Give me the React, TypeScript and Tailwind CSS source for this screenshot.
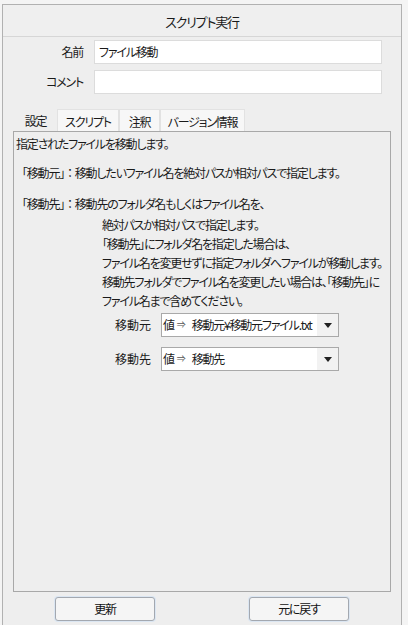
import React from 'react';

const font = "font-['Noto_Sans_CJK_JP','Noto_Sans',sans-serif] [font-feature-settings:'palt']";
const tight = 'tracking-[-1.2px] whitespace-nowrap';
const full = '[font-feature-settings:normal]';

const tabs = [
  { label: '設定', w: 'w-[43px]', active: true },
  { label: 'スクリプト', w: 'w-[62px]', active: false },
  { label: '注釈', w: 'w-[41px]', active: false },
  { label: 'バージョン情報', w: 'w-[85px]', active: false },
];

const detail = [
  '絶対パスか相対パスで指定します。',
  '「移動先」にフォルダ名を指定した場合は、',
  'ファイル名を変更せずに指定フォルダへファイルが移動します。',
  '移動先フォルダでファイル名を変更したい場合は、「移動先」に',
  'ファイル名まで含めてください。',
];

const Field: React.FC<{ label: string; value?: string }> = ({ label, value }) => (
  <div className="flex items-center h-[24px]">
    <div className={`w-[80px] text-right ${tight}`}>{label}</div>
    <div className={`ml-[11px] w-[288px] h-[24px] bg-white border border-[#dcdcdc] flex items-center pl-[4px] ${tight}`}>
      {value}
    </div>
  </div>
);

const Combo: React.FC<{ label: string; value: string }> = ({ label, value }) => (
  <div className="flex items-center h-[24px]">
    <div className="w-[135px] text-right">{label}</div>
    <div className="ml-[10px] w-[178px] h-[24px] bg-white border border-[#a9a9a9] flex items-center overflow-hidden">
      <div className={`flex-1 flex items-center overflow-hidden pl-[1px] ${tight}`}>
        <span>値</span>
        <span className="text-[9px] ml-[3px] text-[#555]">⇒</span>
        <span className="ml-[7px]">{value}</span>
      </div>
      <div className="w-[21px] h-full bg-[#f2f2f2] flex items-center justify-center shrink-0">
        <svg width="8" height="5" viewBox="0 0 8 5"><path d="M0 0h8L4 5z" fill="#222" /></svg>
      </div>
    </div>
  </div>
);

const Button: React.FC<{ label: string }> = ({ label }) => (
  <button className={`w-[100px] h-[24px] rounded-[3px] border border-[#a3a8b0] bg-[#f5f5f5] shadow-[0_0_0_1px_#dbe6f2] text-[12px] text-[#111] ${tight}`}>
    {label}
  </button>
);

export default function App() {
  return (
    <div className={`w-[408px] h-[625px] bg-[#f4f4f4] overflow-hidden text-[12px] text-[#1a1a1a] ${font}`}>
      <div className="ml-[2px] mt-[4px] w-[400px] h-[640px] border border-[#b1b1b1] bg-[#eeeeee]">
        <div className={`h-[32px] border-b border-[#d6d6d6] bg-[#efefef] flex items-center justify-center text-[13px] pt-[2px] ${tight}`}>
          スクリプト実行
        </div>

        <div className="mt-[3px] flex flex-col gap-[6px]">
          <Field label="名前" value="ファイル移動" />
          <Field label="コメント" />
        </div>

        <div className="mt-[15px] ml-[11px] flex h-[22px]">
          {tabs.map((t) => (
            <div
              key={t.label}
              className={`${t.w} h-full flex items-center justify-center pt-[2px] ${tight} ${
                t.active ? 'bg-[#eeeeee]' : 'bg-[#f7f7f7] border border-b-0 border-[#e2e2e2]'
              }`}
            >
              {t.label}
            </div>
          ))}
        </div>

        <div className={`ml-[10px] w-[378px] h-[461px] border border-[#a8a8a8] bg-[#eeeeee] pl-[2px] pt-[4px] ${tight}`}>
          <div className="leading-[15px]">
            <div>指定されたファイルを移動します。</div>
            <div className="h-[14px]" />
            <div><span className={full}>「移動元」：</span>移動したいファイル名を絶対パスか相対パスで指定します。</div>
            <div className="h-[16px]" />
            <div><span className={full}>「移動先」：</span>移動先のフォルダ名もしくはファイル名を、</div>
          </div>
          <div className="pl-[86px] leading-[19px] mt-[4px]">
            {detail.map((d) => (
              <div key={d}>{d}</div>
            ))}
          </div>

          <div className="mt-[3px] flex flex-col gap-[10px] tracking-normal">
            <Combo label="移動元" value="移動元¥移動元ファイル.txt" />
            <Combo label="移動先" value="移動先" />
          </div>
        </div>

        <div className="mt-[5px] flex">
          <div className="ml-[52px]"><Button label="更新" /></div>
          <div className="ml-[94px]"><Button label="元に戻す" /></div>
        </div>
      </div>
    </div>
  );
}
